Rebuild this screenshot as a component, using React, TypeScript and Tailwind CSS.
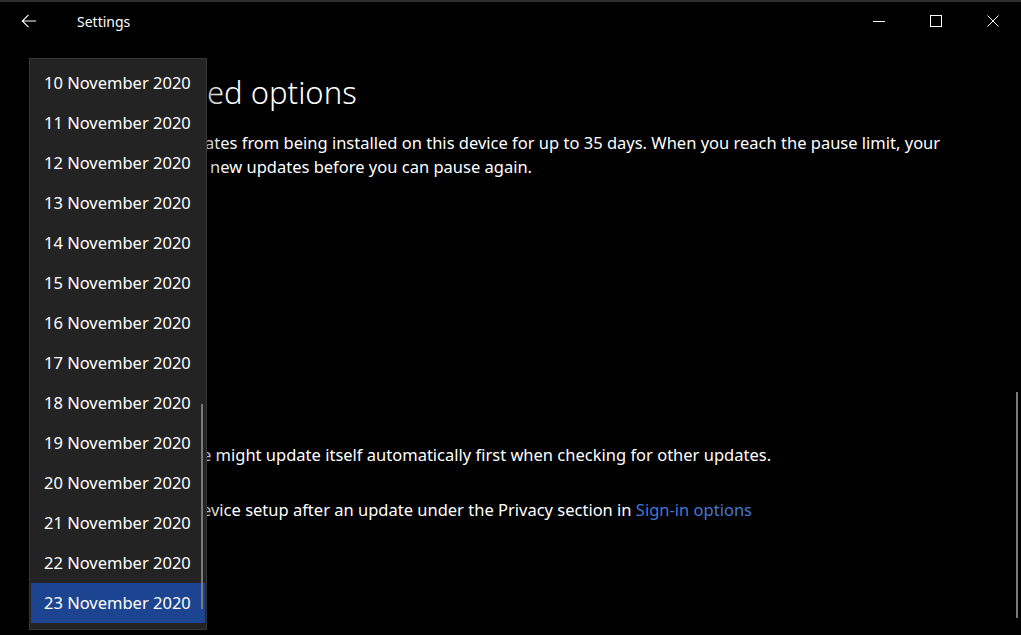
import { useState } from 'react';

const dates = [10, 11, 12, 13, 14, 15, 16, 17, 18, 19, 20, 21, 22, 23].map(
  (d) => `${d} November 2020`
);

function BackIcon() {
  return (
    <svg width="16" height="16" viewBox="0 0 16 16" fill="none" stroke="white" strokeWidth="1.1">
      <path d="M15 8H1.5M7.5 1.8 1.3 8l6.2 6.2" />
    </svg>
  );
}

function TitleBar() {
  return (
    <div className="flex h-[38px] items-center">
      <button className="flex h-full w-[57px] items-center justify-center">
        <BackIcon />
      </button>
      <span className="ml-[20px] text-[14px] text-white">Settings</span>
      <div className="ml-auto flex h-full">
        <button className="flex h-full w-[57px] items-center justify-center">
          <svg width="12" height="12" viewBox="0 0 12 12" stroke="white" strokeWidth="1">
            <path d="M0 6.5h12" />
          </svg>
        </button>
        <button className="flex h-full w-[57px] items-center justify-center">
          <svg width="12" height="12" viewBox="0 0 12 12" fill="none" stroke="white" strokeWidth="1">
            <rect x="0.5" y="0.5" width="11" height="11" />
          </svg>
        </button>
        <button className="flex h-full w-[57px] items-center justify-center">
          <svg width="12" height="12" viewBox="0 0 12 12" stroke="white" strokeWidth="1">
            <path d="M0.5 0.5l11 11M11.5 0.5l-11 11" />
          </svg>
        </button>
      </div>
    </div>
  );
}

function DateList() {
  const [selected, setSelected] = useState(dates[dates.length - 1]);
  return (
    <div className="absolute left-[29px] top-[56px] w-[178px] border border-[#383838] bg-[#232323] pt-[4px] pb-[6px] shadow-[0_8px_24px_rgba(0,0,0,0.6)]">
      {dates.map((d) => (
        <div
          key={d}
          onClick={() => setSelected(d)}
          className={`mx-[1px] flex h-[40px] items-center pl-[13px] text-[16.5px] text-white ${
            d === selected ? 'bg-[#1d4490]' : ''
          }`}
        >
          {d}
        </div>
      ))}
      {/* list scrollbar */}
      <div className="absolute right-[3px] top-[345px] h-[205px] w-[2px] bg-[#7a7a7a]" />
    </div>
  );
}

export default function App() {
  return (
    <div
      className="relative h-[635px] w-[1021px] overflow-hidden border-t-2 border-[#2e2e2e] bg-black text-white"
      style={{ fontFamily: '"Noto Sans", "Open Sans", sans-serif' }}
    >
      <TitleBar />
      {/* page content, the part left of the open list is covered */}
      <div className="flex flex-col whitespace-nowrap pl-[205px]">
        <h1 className="ml-[2px] mt-[28px] text-[31px] font-light leading-[48px]">ed options</h1>
        <p className="mt-[15px] text-[16.5px] leading-[24px]">
          ates from being installed on this device for up to 35 days. When you reach the pause limit, your
        </p>
        <p className="ml-[5px] text-[16.5px] leading-[24px]">new updates before you can pause again.</p>
        <p className="-ml-[3px] mt-[264px] text-[16.5px] leading-[24px]">
          e might update itself automatically first when checking for other updates.
        </p>
        <p className="-ml-[3px] mt-[31px] text-[16.5px] leading-[24px]">
          evice setup after an update under the Privacy section in{' '}
          <a href="#" className="text-[#4378d6]">Sign-in options</a>
        </p>
      </div>
      {/* page scrollbar */}
      <div className="absolute right-[3px] top-[390px] h-[226px] w-[2px] bg-[#7a7a7a]" />
      <DateList />
    </div>
  );
}
